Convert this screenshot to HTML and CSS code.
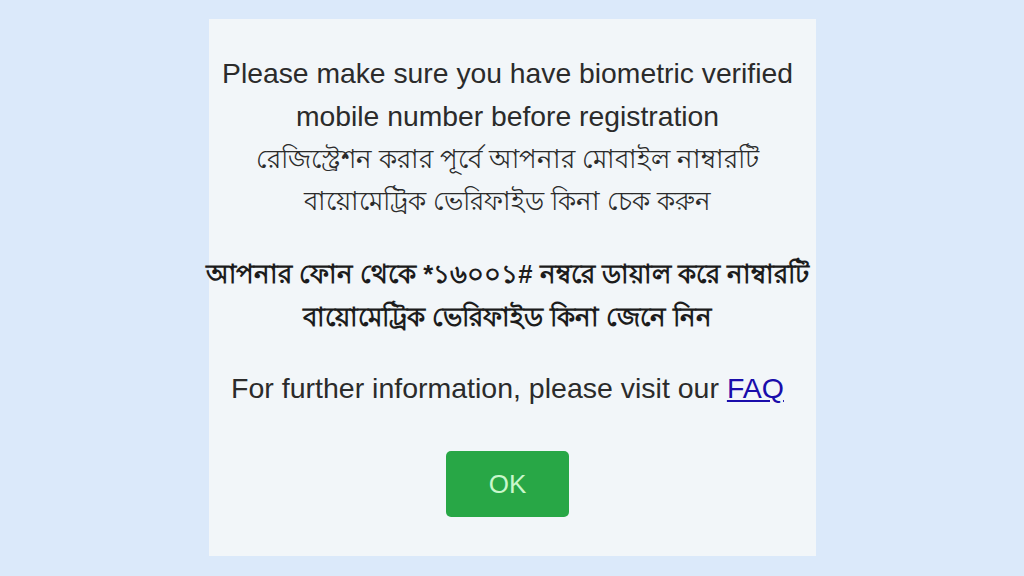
FILE: index.html
```html
<!DOCTYPE html>
<html lang="bn">
<head>
  <meta charset="UTF-8">
  <meta name="viewport" content="width=device-width, initial-scale=1.0">
  <title>Registration Notice</title>
  <link rel="stylesheet" href="styles.css">
</head>
<body>

<main class="page">
  <section class="notice">
    <p class="notice-en">Please make sure you have biometric verified<br>mobile number before registration</p>
    <p class="notice-bn">রেজিস্ট্রেশন করার পূর্বে আপনার মোবাইল নাম্বারটি<br>বায়োমেট্রিক ভেরিফাইড কিনা চেক করুন</p>
    <p class="notice-dial">আপনার ফোন থেকে *১৬০০১# নম্বরে ডায়াল করে নাম্বারটি<br>বায়োমেট্রিক ভেরিফাইড কিনা জেনে নিন</p>
    <p class="notice-faq">For further information, please visit our <a href="#">FAQ</a></p>
    <button class="ok-btn">OK</button>
  </section>
</main>

</body>
</html>
```

FILE: styles.css
```css
body {
  margin: 0;
  padding: 0;
  background-color: #dbe9fa;
  font-family: "Liberation Sans", Arial, "Noto Sans", sans-serif;
  color: #2b2b2b;
}
.page {
  display: flex;
  justify-content: center;
  padding-top: 19px;
  height: 576px;
  box-sizing: border-box;
}
.notice {
  width: 607px;
  height: 537px;
  box-sizing: border-box;
  background-color: #f2f6f9;
  padding: 33px 9px 0 0;
  text-align: center;
  display: flex;
  flex-direction: column;
  align-items: center;
}
.notice p {
  margin: 0;
  white-space: nowrap;
}
.notice-en {
  font-size: 28.3px;
  line-height: 43px;
}
.notice-bn {
  font-size: 25.7px;
  line-height: 42px;
}
.notice-dial {
  font-size: 25.6px;
  font-weight: bold;
  line-height: 43px;
  margin-top: 31px !important;
  color: #1c1c1c;
}
.notice-faq {
  font-size: 28.5px;
  line-height: 43px;
  margin-top: 28px !important;
}
.notice-faq a {
  color: #1a0dab;
}
.ok-btn {
  margin-top: 41px;
  width: 123px;
  height: 66px;
  border: none;
  border-radius: 5px;
  background-color: #28a746;
  color: #c9f7cc;
  font-family: "Liberation Sans", Arial, sans-serif;
  font-size: 26px;
  cursor: pointer;
}
```
